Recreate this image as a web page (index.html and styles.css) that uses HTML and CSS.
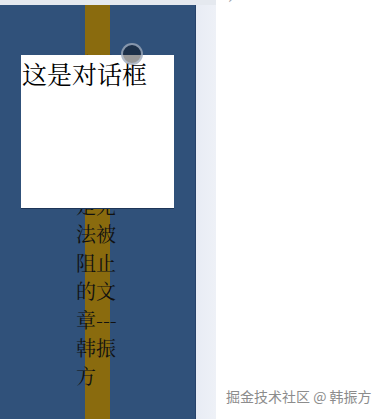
FILE: index.html
```html
<!DOCTYPE html>
<html lang="zh">
<head>
<meta charset="utf-8">
<link rel="stylesheet" href="styles.css">
</head>
<body>
<div class="topbar">
  <div class="topbar-left"></div>
  <span class="chev">›</span>
</div>
<div class="page">
  <div class="panel">
    <div class="vtext">这是一段文字被盖住可是无法被阻止的文章---韩振方</div>
    <div class="dialog">这是对话框</div>
    <div class="dot"></div>
  </div>
  <div class="gutter"></div>
  <div class="main"></div>
</div>
<div class="mark">掘金技术社区 @ 韩振方</div>
</body>
</html>
```

FILE: styles.css
```css
html, body {
  margin: 0;
  padding: 0;
  width: 385px;
  height: 419px;
  overflow: hidden;
  background: #ffffff;
  font-family: "Noto Serif CJK SC", "Noto Sans CJK SC", serif;
}

.topbar {
  display: flex;
  height: 5px;
  position: relative;
}

.topbar-left {
  width: 216px;
  background: #e5e9ef;
}

.chev {
  margin-left: 12px;
  margin-top: -8px;
  font-family: "DejaVu Sans", sans-serif;
  font-size: 13px;
  line-height: 13px;
  color: #9aa0a8;
}

.page {
  display: flex;
  height: 414px;
}

.panel {
  position: relative;
  width: 195px;
  flex: none;
  border-right: 1px solid #26426a;
  background: linear-gradient(to right, #30517a 0, #30517a 85px, #8a6b0e 85px, #8a6b0e 110px, #30517a 110px);
}

.vtext {
  width: 42px;
  margin-left: 76px;
  padding-top: 45px;
  font-size: 20px;
  line-height: 28.4px;
  color: #111111;
  word-break: break-all;
}

.dialog {
  position: absolute;
  left: 21px;
  top: 50px;
  width: 153px;
  height: 154px;
  background: #ffffff;
  border-bottom: 1px solid #1d3557;
  font-size: 25px;
  line-height: 36px;
  color: #000000;
  padding-left: 1px;
  box-sizing: border-box;
}

.dot {
  position: absolute;
  left: 121px;
  top: 38px;
  width: 18px;
  height: 18px;
  border-radius: 50%;
  border: 2px solid rgba(190, 205, 225, 0.65);
  background: rgba(0, 0, 0, 0.4);
}

.gutter {
  width: 20px;
  flex: none;
  background: linear-gradient(to right, #e8ecf4, #eef1f7);
}

.main {
  flex: 1;
  background: #ffffff;
}

.mark {
  position: absolute;
  left: 226px;
  top: 386px;
  font-family: "Noto Sans CJK SC", sans-serif;
  font-size: 14px;
  line-height: 20px;
  color: #8c8c8c;
  text-shadow: 1px 1px 0 #ffffff, -1px -1px 0 #ffffff;
  white-space: nowrap;
}
```
